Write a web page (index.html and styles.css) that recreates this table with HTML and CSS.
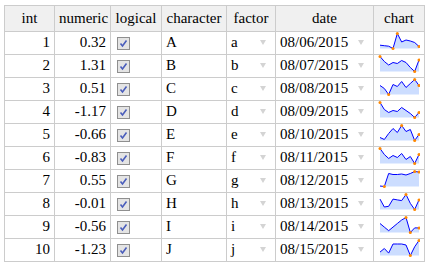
FILE: index.html
```html
<!DOCTYPE html>
<html>
<head>
<meta charset="utf-8">
<link rel="stylesheet" href="styles.css">
</head>
<body>
<div class="grid">
  <div class="row">
    <div class="cell head">int</div>
    <div class="cell head">numeric</div>
    <div class="cell head">logical</div>
    <div class="cell head">character</div>
    <div class="cell head">factor</div>
    <div class="cell head">date</div>
    <div class="cell head">chart</div>
  </div>

  <div class="row">
    <div class="cell num">1</div><div class="cell num">0.32</div>
    <div class="cell check"><svg class="cb" width="13" height="13"><rect x="0.5" y="0.5" width="12" height="12" fill="#e4e4e4" stroke="#8f8f8f"/><path d="M3.5 6.5 L5.5 9 L9.5 3.5" fill="none" stroke="#4a5dbb" stroke-width="1.6"/></svg></div>
    <div class="cell">A</div>
    <div class="cell drop"><span class="txt">a</span><span class="arrow"></span></div>
    <div class="cell drop"><span class="txt">08/06/2015</span><span class="arrow"></span></div>
    <div class="cell chart"><svg class="spark" width="44" height="18"><polygon class="area" points="2,16.5 2,13.2 6.33,13.7 10.67,14.2 15,16.5 19.33,1.5 23.67,10 28,8 32.33,9 36.67,10.5 41,14.5 41,16.5"/><polyline class="line" points="2,13.2 6.33,13.7 10.67,14.2 15,16.5 19.33,1.5 23.67,10 28,8 32.33,9 36.67,10.5 41,14.5"/><circle cx="15" cy="16.5" r="1.5"/><circle cx="19.33" cy="1.5" r="1.5"/><circle cx="41" cy="14.5" r="1.5"/></svg></div>
  </div>

  <div class="row">
    <div class="cell num">2</div><div class="cell num">1.31</div>
    <div class="cell check"><svg class="cb" width="13" height="13"><rect x="0.5" y="0.5" width="12" height="12" fill="#e4e4e4" stroke="#8f8f8f"/><path d="M3.5 6.5 L5.5 9 L9.5 3.5" fill="none" stroke="#4a5dbb" stroke-width="1.6"/></svg></div>
    <div class="cell">B</div>
    <div class="cell drop"><span class="txt">b</span><span class="arrow"></span></div>
    <div class="cell drop"><span class="txt">08/07/2015</span><span class="arrow"></span></div>
    <div class="cell chart"><svg class="spark" width="44" height="18"><polygon class="area" points="2,16.5 2,1.5 6.33,6.5 10.67,10 15,7.5 19.33,8.5 23.67,5.5 28,7.5 32.33,12.5 36.67,16.5 41,5 41,16.5"/><polyline class="line" points="2,1.5 6.33,6.5 10.67,10 15,7.5 19.33,8.5 23.67,5.5 28,7.5 32.33,12.5 36.67,16.5 41,5"/><circle cx="2" cy="1.5" r="1.5"/><circle cx="36.67" cy="16.5" r="1.5"/><circle cx="41" cy="5" r="1.5"/></svg></div>
  </div>

  <div class="row">
    <div class="cell num">3</div><div class="cell num">0.51</div>
    <div class="cell check"><svg class="cb" width="13" height="13"><rect x="0.5" y="0.5" width="12" height="12" fill="#e4e4e4" stroke="#8f8f8f"/><path d="M3.5 6.5 L5.5 9 L9.5 3.5" fill="none" stroke="#4a5dbb" stroke-width="1.6"/></svg></div>
    <div class="cell">C</div>
    <div class="cell drop"><span class="txt">c</span><span class="arrow"></span></div>
    <div class="cell drop"><span class="txt">08/08/2015</span><span class="arrow"></span></div>
    <div class="cell chart"><svg class="spark" width="44" height="18"><polygon class="area" points="2,16.5 2,7.5 6.33,10.5 10.67,16.5 15,6.5 19.33,8.5 23.67,3.5 28,9.5 32.33,5.5 36.67,1.5 41,7.5 41,16.5"/><polyline class="line" points="2,7.5 6.33,10.5 10.67,16.5 15,6.5 19.33,8.5 23.67,3.5 28,9.5 32.33,5.5 36.67,1.5 41,7.5"/><circle cx="10.67" cy="16.5" r="1.5"/><circle cx="36.67" cy="1.5" r="1.5"/><circle cx="41" cy="7.5" r="1.5"/></svg></div>
  </div>

  <div class="row">
    <div class="cell num">4</div><div class="cell num">-1.17</div>
    <div class="cell check"><svg class="cb" width="13" height="13"><rect x="0.5" y="0.5" width="12" height="12" fill="#e4e4e4" stroke="#8f8f8f"/><path d="M3.5 6.5 L5.5 9 L9.5 3.5" fill="none" stroke="#4a5dbb" stroke-width="1.6"/></svg></div>
    <div class="cell">D</div>
    <div class="cell drop"><span class="txt">d</span><span class="arrow"></span></div>
    <div class="cell drop"><span class="txt">08/09/2015</span><span class="arrow"></span></div>
    <div class="cell chart"><svg class="spark" width="44" height="18"><polygon class="area" points="2,16.5 2,1.5 6.33,8.5 10.67,11.5 15,9.5 19.33,10.5 23.67,6.5 28,9.5 32.33,12.5 36.67,16.5 41,11.5 41,16.5"/><polyline class="line" points="2,1.5 6.33,8.5 10.67,11.5 15,9.5 19.33,10.5 23.67,6.5 28,9.5 32.33,12.5 36.67,16.5 41,11.5"/><circle cx="2" cy="1.5" r="1.5"/><circle cx="36.67" cy="16.5" r="1.5"/><circle cx="41" cy="11.5" r="1.5"/></svg></div>
  </div>

  <div class="row">
    <div class="cell num">5</div><div class="cell num">-0.66</div>
    <div class="cell check"><svg class="cb" width="13" height="13"><rect x="0.5" y="0.5" width="12" height="12" fill="#e4e4e4" stroke="#8f8f8f"/><path d="M3.5 6.5 L5.5 9 L9.5 3.5" fill="none" stroke="#4a5dbb" stroke-width="1.6"/></svg></div>
    <div class="cell">E</div>
    <div class="cell drop"><span class="txt">e</span><span class="arrow"></span></div>
    <div class="cell drop"><span class="txt">08/10/2015</span><span class="arrow"></span></div>
    <div class="cell chart"><svg class="spark" width="44" height="18"><polygon class="area" points="2,16.5 2,13.5 6.33,15.5 10.67,9.5 15,4.5 19.33,8.5 23.67,1.5 28,7.5 32.33,5.5 36.67,16.5 41,10.5 41,16.5"/><polyline class="line" points="2,13.5 6.33,15.5 10.67,9.5 15,4.5 19.33,8.5 23.67,1.5 28,7.5 32.33,5.5 36.67,16.5 41,10.5"/><circle cx="23.67" cy="1.5" r="1.5"/><circle cx="36.67" cy="16.5" r="1.5"/><circle cx="41" cy="10.5" r="1.5"/></svg></div>
  </div>

  <div class="row">
    <div class="cell num">6</div><div class="cell num">-0.83</div>
    <div class="cell check"><svg class="cb" width="13" height="13"><rect x="0.5" y="0.5" width="12" height="12" fill="#e4e4e4" stroke="#8f8f8f"/><path d="M3.5 6.5 L5.5 9 L9.5 3.5" fill="none" stroke="#4a5dbb" stroke-width="1.6"/></svg></div>
    <div class="cell">F</div>
    <div class="cell drop"><span class="txt">f</span><span class="arrow"></span></div>
    <div class="cell drop"><span class="txt">08/11/2015</span><span class="arrow"></span></div>
    <div class="cell chart"><svg class="spark" width="44" height="18"><polygon class="area" points="2,16.5 2,1.5 6.33,7.5 10.67,11.5 15,8.5 19.33,10.5 23.67,6.5 28,12.5 32.33,9.5 36.67,16.5 41,7.5 41,16.5"/><polyline class="line" points="2,1.5 6.33,7.5 10.67,11.5 15,8.5 19.33,10.5 23.67,6.5 28,12.5 32.33,9.5 36.67,16.5 41,7.5"/><circle cx="2" cy="1.5" r="1.5"/><circle cx="36.67" cy="16.5" r="1.5"/><circle cx="41" cy="7.5" r="1.5"/></svg></div>
  </div>

  <div class="row">
    <div class="cell num">7</div><div class="cell num">0.55</div>
    <div class="cell check"><svg class="cb" width="13" height="13"><rect x="0.5" y="0.5" width="12" height="12" fill="#e4e4e4" stroke="#8f8f8f"/><path d="M3.5 6.5 L5.5 9 L9.5 3.5" fill="none" stroke="#4a5dbb" stroke-width="1.6"/></svg></div>
    <div class="cell">G</div>
    <div class="cell drop"><span class="txt">g</span><span class="arrow"></span></div>
    <div class="cell drop"><span class="txt">08/12/2015</span><span class="arrow"></span></div>
    <div class="cell chart"><svg class="spark" width="44" height="18"><polygon class="area" points="2,16.5 2,16 6.33,16.5 10.67,3.5 15,4.5 19.33,4.5 23.67,4 28,5 32.33,3.5 36.67,1.5 41,2 41,16.5"/><polyline class="line" points="2,16 6.33,16.5 10.67,3.5 15,4.5 19.33,4.5 23.67,4 28,5 32.33,3.5 36.67,1.5 41,2"/><circle cx="6.33" cy="16.5" r="1.5"/><circle cx="36.67" cy="1.5" r="1.5"/><circle cx="41" cy="2" r="1.5"/></svg></div>
  </div>

  <div class="row">
    <div class="cell num">8</div><div class="cell num">-0.01</div>
    <div class="cell check"><svg class="cb" width="13" height="13"><rect x="0.5" y="0.5" width="12" height="12" fill="#e4e4e4" stroke="#8f8f8f"/><path d="M3.5 6.5 L5.5 9 L9.5 3.5" fill="none" stroke="#4a5dbb" stroke-width="1.6"/></svg></div>
    <div class="cell">H</div>
    <div class="cell drop"><span class="txt">h</span><span class="arrow"></span></div>
    <div class="cell drop"><span class="txt">08/13/2015</span><span class="arrow"></span></div>
    <div class="cell chart"><svg class="spark" width="44" height="18"><polygon class="area" points="2,16.5 2,6.1 6.33,14 10.67,13.3 15,6.1 19.33,6.9 23.67,7.6 28,1.5 32.33,10.4 36.67,16.5 41,6.9 41,16.5"/><polyline class="line" points="2,6.1 6.33,14 10.67,13.3 15,6.1 19.33,6.9 23.67,7.6 28,1.5 32.33,10.4 36.67,16.5 41,6.9"/><circle cx="28" cy="1.5" r="1.5"/><circle cx="36.67" cy="16.5" r="1.5"/><circle cx="41" cy="6.9" r="1.5"/></svg></div>
  </div>

  <div class="row">
    <div class="cell num">9</div><div class="cell num">-0.56</div>
    <div class="cell check"><svg class="cb" width="13" height="13"><rect x="0.5" y="0.5" width="12" height="12" fill="#e4e4e4" stroke="#8f8f8f"/><path d="M3.5 6.5 L5.5 9 L9.5 3.5" fill="none" stroke="#4a5dbb" stroke-width="1.6"/></svg></div>
    <div class="cell">I</div>
    <div class="cell drop"><span class="txt">i</span><span class="arrow"></span></div>
    <div class="cell drop"><span class="txt">08/14/2015</span><span class="arrow"></span></div>
    <div class="cell chart"><svg class="spark" width="44" height="18"><polygon class="area" points="2,16.5 2,7.5 6.33,11.1 10.67,14.7 15,11.1 19.33,7.5 23.67,4 28,1.5 32.33,16.5 36.67,11.9 41,11.9 41,16.5"/><polyline class="line" points="2,7.5 6.33,11.1 10.67,14.7 15,11.1 19.33,7.5 23.67,4 28,1.5 32.33,16.5 36.67,11.9 41,11.9"/><circle cx="28" cy="1.5" r="1.5"/><circle cx="32.33" cy="16.5" r="1.5"/><circle cx="41" cy="11.9" r="1.5"/></svg></div>
  </div>

  <div class="row">
    <div class="cell num">10</div><div class="cell num">-1.23</div>
    <div class="cell check"><svg class="cb" width="13" height="13"><rect x="0.5" y="0.5" width="12" height="12" fill="#e4e4e4" stroke="#8f8f8f"/><path d="M3.5 6.5 L5.5 9 L9.5 3.5" fill="none" stroke="#4a5dbb" stroke-width="1.6"/></svg></div>
    <div class="cell">J</div>
    <div class="cell drop"><span class="txt">j</span><span class="arrow"></span></div>
    <div class="cell drop"><span class="txt">08/15/2015</span><span class="arrow"></span></div>
    <div class="cell chart"><svg class="spark" width="44" height="18"><polygon class="area" points="2,16.5 2,13.1 6.33,9.5 10.67,14.1 15,5 19.33,5 23.67,5 28,6 32.33,16.5 36.67,7.8 41,1.5 41,16.5"/><polyline class="line" points="2,13.1 6.33,9.5 10.67,14.1 15,5 19.33,5 23.67,5 28,6 32.33,16.5 36.67,7.8 41,1.5"/><circle cx="32.33" cy="16.5" r="1.5"/><circle cx="41" cy="1.5" r="1.5"/></svg></div>
  </div>
</div>
</body>
</html>
```

FILE: styles.css
```css
html, body {
  margin: 0;
  padding: 0;
  background: #fff;
}

.grid {
  display: grid;
  grid-template-columns: 50px 56px 51px 65px 49px 98px 51px;
  grid-template-rows: 26px repeat(10, 23px);
  width: max-content;
  margin: 5px 0 0 4px;
  border-left: 1px solid #ccc;
  border-top: 1px solid #ccc;
  font-family: "Liberation Serif", "Times New Roman", serif;
  font-size: 15px;
  color: #000;
}

.row {
  display: contents;
}

.cell {
  box-sizing: border-box;
  border-right: 1px solid #ccc;
  border-bottom: 1px solid #ccc;
  padding: 0 4px;
  line-height: 21px;
  white-space: nowrap;
  overflow: hidden;
  background: #fff;
}

.head {
  background: #f0f0f0;
  text-align: center;
  line-height: 25px;
}

.num {
  text-align: right;
}

.check {
  display: flex;
  align-items: center;
}

.cb {
  display: block;
  margin-left: 2px;
}

.drop {
  display: flex;
  justify-content: space-between;
}

.txt {
  line-height: 21px;
}

.arrow {
  width: 16px;
  display: flex;
  justify-content: center;
  align-items: center;
}

.arrow::before {
  content: "";
  display: block;
  width: 0;
  height: 0;
  border-left: 3px solid transparent;
  border-right: 3px solid transparent;
  border-top: 5px solid #d4d4d4;
  margin-top: -1px;
}

.chart {
  display: flex;
  align-items: flex-start;
}

.spark {
  display: block;
}

.spark .area {
  fill: #ccddff;
  stroke: none;
}

.spark .line {
  fill: none;
  stroke: #0000ff;
  stroke-width: 1;
}

.spark circle {
  fill: #ff8800;
}
```
